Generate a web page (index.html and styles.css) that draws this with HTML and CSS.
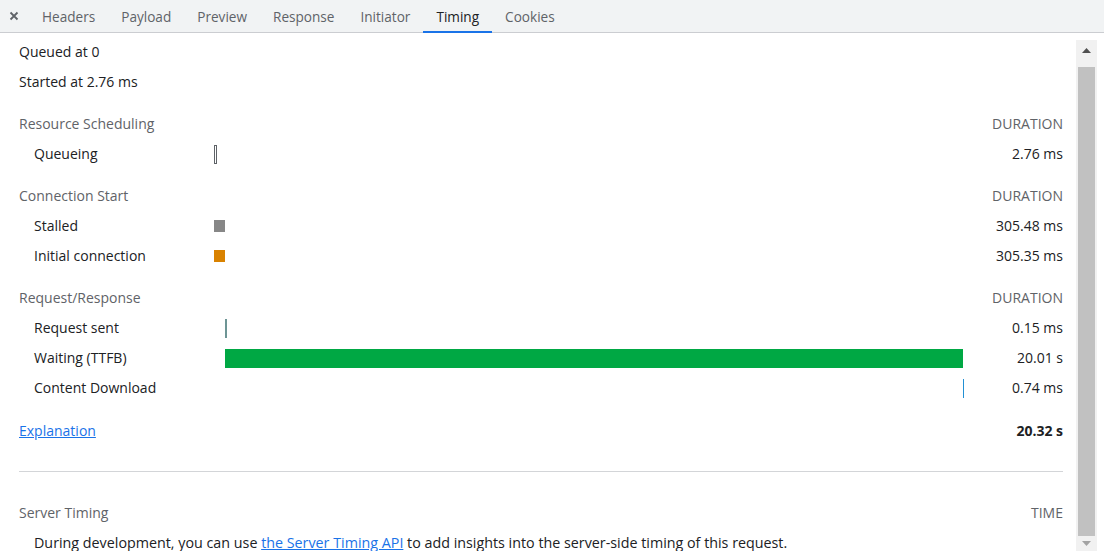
FILE: index.html
```html
<!DOCTYPE html>
<html>
<head>
<meta charset="utf-8">
<link rel="stylesheet" href="styles.css">
</head>
<body>
<div class="panel">
  <div class="tabbar">
    <div class="close">
      <svg width="10" height="10" viewBox="0 0 10 10"><path d="M1.5 1.5 L8.5 8.5 M8.5 1.5 L1.5 8.5" stroke="#5f6368" stroke-width="1.8"/></svg>
    </div>
    <div class="tab">Headers</div>
    <div class="tab">Payload</div>
    <div class="tab">Preview</div>
    <div class="tab">Response</div>
    <div class="tab">Initiator</div>
    <div class="tab active">Timing</div>
    <div class="tab">Cookies</div>
  </div>
  <div class="body">
    <div class="content">
      <div class="row top">Queued at 0</div>
      <div class="row top">Started at 2.76 ms</div>

      <div class="row head"><span class="label-h">Resource Scheduling</span><span class="value-h">DURATION</span></div>
      <div class="row sub">
        <span class="label">Queueing</span>
        <span class="track"><span class="bar queue" style="margin-left:0px;width:3px"></span></span>
        <span class="value">2.76 ms</span>
      </div>

      <div class="row head"><span class="label-h">Connection Start</span><span class="value-h">DURATION</span></div>
      <div class="row sub">
        <span class="label">Stalled</span>
        <span class="track"><span class="bar stalled" style="margin-left:0px;width:11px"></span></span>
        <span class="value">305.48 ms</span>
      </div>
      <div class="row sub">
        <span class="label">Initial connection</span>
        <span class="track"><span class="bar conn" style="margin-left:0px;width:11px"></span></span>
        <span class="value">305.35 ms</span>
      </div>

      <div class="row head"><span class="label-h">Request/Response</span><span class="value-h">DURATION</span></div>
      <div class="row sub">
        <span class="label">Request sent</span>
        <span class="track"><span class="bar sent" style="margin-left:11px;width:2px"></span></span>
        <span class="value">0.15 ms</span>
      </div>
      <div class="row sub">
        <span class="label">Waiting (TTFB)</span>
        <span class="track"><span class="bar wait" style="margin-left:11px;width:738px"></span></span>
        <span class="value">20.01 s</span>
      </div>
      <div class="row sub">
        <span class="label">Content Download</span>
        <span class="track"><span class="bar download" style="margin-left:749px;width:1px"></span></span>
        <span class="value">0.74 ms</span>
      </div>

      <div class="row head total"><a class="link" href="#">Explanation</a><span class="total-value">20.32 s</span></div>

      <div class="divider"></div>

      <div class="row head server"><span class="label-h">Server Timing</span><span class="value-h">TIME</span></div>
      <div class="row sub">
        <span class="desc">During development, you can use <a class="link" href="#">the Server Timing API</a> to add insights into the server-side timing of this request.</span>
      </div>
    </div>
    <div class="scrollbar">
      <div class="arrow up"><svg width="9" height="5" viewBox="0 0 9 5"><path d="M0 5 L4.5 0 L9 5 Z" fill="#505050"/></svg></div>
      <div class="thumb"></div>
      <div class="arrow down"><svg width="9" height="5" viewBox="0 0 9 5"><path d="M0 0 L4.5 5 L9 0 Z" fill="#a3a3a3"/></svg></div>
    </div>
    <div class="gutter"></div>
  </div>
</div>
</body>
</html>
```

FILE: styles.css
```css
html, body {
  margin: 0;
  padding: 0;
  background: #ffffff;
}
body {
  font-family: "Open Sans", "Noto Sans", sans-serif;
  font-size: 14px;
  color: #202124;
  overflow: hidden;
}
.panel {
  width: 1104px;
  height: 551px;
  display: flex;
  flex-direction: column;
}
.tabbar {
  height: 32px;
  flex: none;
  background: #f1f3f4;
  border-bottom: 1px solid #cbcdd1;
  display: flex;
  align-items: stretch;
  font-size: 13.6px;
}
.close {
  width: 28px;
  display: flex;
  align-items: center;
  justify-content: center;
  padding-right: 1px;
}
.tab {
  padding: 1px 13px 0;
  display: flex;
  align-items: center;
  color: #5f6368;
  border-bottom: 2px solid transparent;
  margin-bottom: -1px;
}
.tab.active {
  color: #202124;
  border-bottom-color: #1a73e8;
}
.body {
  flex: 1;
  display: flex;
  min-height: 0;
}
.content {
  flex: 1;
  padding: 4px 13px 0 19px;
  overflow: hidden;
}
.row {
  height: 30px;
  line-height: 30px;
  display: flex;
  align-items: center;
  white-space: nowrap;
}
.row.head {
  margin-top: 12px;
  justify-content: space-between;
}
.row.head.total {
  margin-top: 13px;
}
.label-h, .value-h {
  color: #5f6368;
}
.row.sub {
  padding-left: 15px;
}
.label {
  width: 180px;
  flex: none;
}
.track {
  width: 749px;
  flex: none;
  height: 30px;
  display: flex;
  align-items: center;
}
.bar {
  display: block;
  flex: none;
  box-sizing: border-box;
}
.queue {
  height: 19px;
  border: 1px solid #5f6368;
  background: #ffffff;
}
.stalled {
  height: 12px;
  background: #878787;
}
.conn {
  height: 12px;
  background: #d98200;
}
.sent {
  height: 19px;
  background: #6d9595;
}
.wait {
  height: 19px;
  background: #00a844;
}
.download {
  height: 19px;
  background: #2290d4;
}
.value {
  flex: 1;
  text-align: right;
}
.link {
  color: #1a73e8;
  text-decoration: underline;
}
.total-value {
  font-weight: 700;
}
.divider {
  height: 1px;
  background: #d3d5d8;
  margin-top: 25px;
}
.row.server {
  margin-top: 26px;
}
.desc {
  color: #202124;
  font-size: 14.3px;
}
.scrollbar {
  width: 21px;
  flex: none;
  margin-top: 7px;
  background: #f1f1f1;
  display: flex;
  flex-direction: column;
}
.arrow {
  flex: none;
  display: flex;
  align-items: center;
  justify-content: center;
}
.arrow.up {
  height: 20px;
}
.arrow.down {
  height: 15px;
}
.thumb {
  flex: 1;
  margin: 7px 2px 0;
  background: #c1c1c1;
}
.gutter {
  width: 7px;
  flex: none;
}
```
